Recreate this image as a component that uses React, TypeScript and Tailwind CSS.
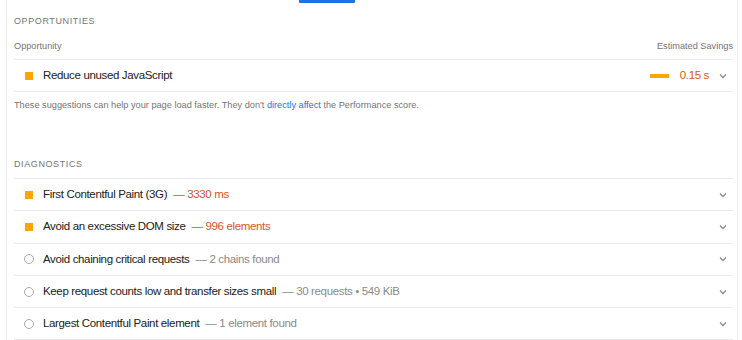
import React from "react";

const ORANGE_TEXT = "text-[#d9531e]";

function Chevron() {
  return (
    <svg width="10" height="10" viewBox="0 0 10 10" className="shrink-0">
      <path d="M2 3.5 L5 6.5 L8 3.5" fill="none" stroke="#8a8a8a" strokeWidth="1.3" />
    </svg>
  );
}

function Square() {
  return <span className="block w-[8px] h-[8px] bg-[#ffa400] shrink-0" />;
}

function Circle() {
  return <span className="block w-[10px] h-[10px] rounded-full border-[1.5px] border-[#a8a8a8] shrink-0" />;
}

type Diag = { icon: "sq" | "ci"; title: string; value: string; warn: boolean };

const diags: Diag[] = [
  { icon: "sq", title: "First Contentful Paint (3G)", value: "— 3330 ms", warn: true },
  { icon: "sq", title: "Avoid an excessive DOM size", value: "— 996 elements", warn: true },
  { icon: "ci", title: "Avoid chaining critical requests", value: "— 2 chains found", warn: false },
  { icon: "ci", title: "Keep request counts low and transfer sizes small", value: "— 30 requests • 549 KiB", warn: false },
  { icon: "ci", title: "Largest Contentful Paint element", value: "— 1 element found", warn: false },
];

export default function App() {
  return (
    <div className="w-[742px] h-[340px] bg-white overflow-hidden relative" style={{ fontFamily: "'Liberation Sans', Arial, sans-serif" }}>
      <div className="absolute top-0 left-[299px] w-[56px] h-[3px] bg-[#1a73e8] rounded-b-[1px]" />
      <div className="ml-[6px] mr-[4px] h-full border-l border-r border-[#ececec] pl-[7px] pr-[4px]">
        <div className="pt-[15px] text-[9px] leading-[12px] tracking-[0.6px] text-[#757575]">OPPORTUNITIES</div>
        <div className="mt-[13px] flex justify-between text-[9.2px] leading-[13px] text-[#757575] pb-[6px] border-b border-[#ebebeb]">
          <span>Opportunity</span>
          <span>Estimated Savings</span>
        </div>
        <div className="h-[32px] flex items-center border-b border-[#ebebeb] tracking-[-0.35px]">
          <div className="w-[29px] flex justify-center"><Square /></div>
          <span className="text-[11.5px] text-[#212121]">Reduce unused JavaScript</span>
          <div className="ml-auto flex items-center">
            <span className="block w-[19px] h-[4px] bg-[#ffa400]" />
            <span className={`ml-[11px] text-[11.5px] ${ORANGE_TEXT}`}>0.15 s</span>
            <span className="ml-[9px] mr-[5px]"><Chevron /></span>
          </div>
        </div>
        <div className="mt-[7px] text-[9.2px] leading-[12px] text-[#757575]">
          These suggestions can help your page load faster. They don't <span className="text-[#1a73e8]">directly affect</span> the Performance score.
        </div>
        <div className="mt-[47px] text-[9px] leading-[12px] tracking-[0.6px] text-[#757575] pb-[8px] border-b border-[#ebebeb]">DIAGNOSTICS</div>
        {diags.map((d) => (
          <div key={d.title} className="h-[32.3px] flex items-center border-b border-[#ebebeb] tracking-[-0.35px]">
            <div className="w-[29px] flex justify-center">{d.icon === "sq" ? <Square /> : <Circle />}</div>
            <span className="text-[11.5px] text-[#212121]">{d.title}</span>
            <span className={`ml-[6px] text-[11.5px] ${d.warn ? ORANGE_TEXT : "text-[#8a8a8a]"}`}>{d.value}</span>
            <span className="ml-auto mr-[5px]"><Chevron /></span>
          </div>
        ))}
      </div>
    </div>
  );
}
